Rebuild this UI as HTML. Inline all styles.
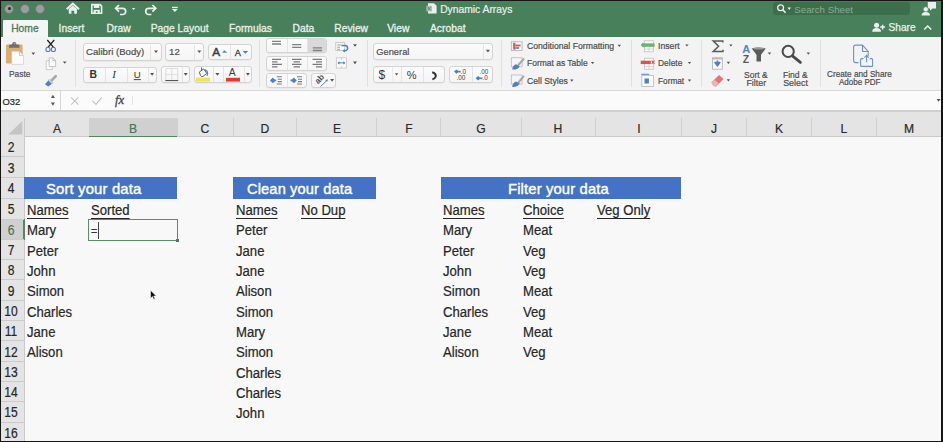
<!DOCTYPE html>
<html><head><meta charset="utf-8">
<style>
*{margin:0;padding:0;box-sizing:border-box}
html,body{width:943px;height:442px;overflow:hidden;background:#f8f8f8;font-family:"Liberation Sans",sans-serif;position:relative}
.a{position:absolute}
.t{position:absolute;white-space:nowrap;line-height:1}
</style></head><body>
<div class="a" style="left:0px;top:0px;width:943px;height:37px;background:#47805a"></div>
<div class="a" style="left:4.3px;top:3.8px;width:10px;height:10px;border-radius:50%;background:#9a9d9b;border:1px solid #6f7872"></div>
<div class="a" style="left:19.6px;top:3.8px;width:10px;height:10px;border-radius:50%;background:#9a9d9b;border:1px solid #6f7872"></div>
<div class="a" style="left:34.9px;top:3.8px;width:10px;height:10px;border-radius:50%;background:#9a9d9b;border:1px solid #6f7872"></div>
<div class="a" style="left:7.8px;top:7.3px;width:3px;height:3px;border-radius:50%;background:#2a2a2a"></div>
<svg class="a" style="left:60px;top:0px" width="400" height="20" viewBox="60 0 400 20">
 <path d="M66.7 9.2 L72.8 3.6 L79 9.2" fill="none" stroke="#eaf1ec" stroke-width="2" stroke-linejoin="miter"/>
 <path d="M68.8 9 L72.8 5.4 L76.9 9 V13.8 H74.2 V10.8 H71.4 V13.8 H68.8Z" fill="#eaf1ec"/>
 <path d="M91.8 4.6 H100 L101.6 6.2 V13.2 H91.8 Z" fill="none" stroke="#eaf1ec" stroke-width="1.6"/>
 <rect x="93.8" y="4.6" width="5.5" height="3.4" fill="#eaf1ec"/>
 <rect x="93.6" y="9.8" width="6.2" height="3.6" fill="#eaf1ec"/>
 <rect x="95.8" y="11.3" width="1.8" height="1.5" fill="#47805a"/>
 <path d="M116.2 8.3 H122.6 A3.1 3.1 0 0 1 122.6 14.5 H120" fill="none" stroke="#eaf1ec" stroke-width="1.7"/>
 <path d="M119 5 L115.6 8.3 L119 11.6" fill="none" stroke="#eaf1ec" stroke-width="1.7"/>
 <path d="M131.9 7.9 H135.29999999999998 L133.6 10.1Z" fill="#eaf1ec"/>
 <path d="M155.2 8.3 H148.8 A3.1 3.1 0 0 0 148.8 14.5 H151.4" fill="none" stroke="#eaf1ec" stroke-width="1.7"/>
 <path d="M152.4 5 L155.8 8.3 L152.4 11.6" fill="none" stroke="#eaf1ec" stroke-width="1.7"/>
 <rect x="172" y="6.8" width="5.8" height="1.3" fill="#eaf1ec"/>
 <path d="M171.9 9 H177.8 L174.85 12.1Z" fill="#eaf1ec"/>
 <path d="M428 3.2 H434 L436.6 5.8 V13.6 H428Z" fill="#eaf1ec"/>
 <rect x="426.3" y="5.8" width="5.6" height="5.6" fill="#a8c0ae"/>
 <path d="M427.6 7 L430.6 10.2 M430.6 7 L427.6 10.2" stroke="#47805a" stroke-width="0.8"/>
</svg>
<div class="t" style="left:440.20px;top:5.44px;font-size:10.3px;color:#eaf1ec;font-weight:normal;-webkit-text-stroke:0.2px #eaf1ec">Dynamic Arrays</div>
<div class="a" style="left:773px;top:2.3px;width:136.5px;height:13.2px;background:#3d6e4b;border-radius:3px"></div>
<svg class="a" style="left:770px;top:0px" width="30" height="18" viewBox="770 0 30 18">
 <circle cx="780.6" cy="7.7" r="2.9" fill="none" stroke="#eaf1ec" stroke-width="1.3"/>
 <path d="M782.8 9.9 L785.6 12.8" stroke="#eaf1ec" stroke-width="1.6"/>
 <path d="M787.4000000000001 7.6000000000000005 H791.0 L789.2 10.0Z" fill="#eaf1ec"/>
</svg>
<div class="t" style="left:794.30px;top:4.56px;font-size:9.7px;color:#89ab93;font-weight:normal;">Search Sheet</div>
<svg class="a" style="left:915px;top:0px" width="28" height="18" viewBox="915 0 28 18">
 <path d="M927.5 2 H936 V8.5 H932.5 L930 10.8 V8.5 H927.5Z" fill="#eaf1ec"/>
 <path d="M927.5 2 V8.5" stroke="#47805a" stroke-width="0.6"/>
 <circle cx="925.8" cy="9.3" r="2.6" fill="#eaf1ec" stroke="#47805a" stroke-width="0.7"/>
 <path d="M921.6 15.5 Q921.6 12 925.8 12 Q930 12 930 15.5Z" fill="#eaf1ec"/>
</svg>
<div class="a" style="left:3px;top:20.4px;width:45px;height:17px;background:#f5f5f5;border-radius:1px 1px 0 0"></div>
<div class="t" style="left:11.20px;top:23.74px;font-size:10.3px;color:#4a7a58;font-weight:normal;-webkit-text-stroke:0.3px #4a7a58">Home</div>
<div class="t" style="left:58.60px;top:23.74px;font-size:10.3px;color:#eaf1ec;font-weight:normal;-webkit-text-stroke:0.3px #eaf1ec">Insert</div>
<div class="t" style="left:106.60px;top:23.74px;font-size:10.3px;color:#eaf1ec;font-weight:normal;-webkit-text-stroke:0.3px #eaf1ec">Draw</div>
<div class="t" style="left:150.70px;top:23.74px;font-size:10.3px;color:#eaf1ec;font-weight:normal;-webkit-text-stroke:0.3px #eaf1ec">Page Layout</div>
<div class="t" style="left:228.90px;top:23.74px;font-size:10.3px;color:#eaf1ec;font-weight:normal;-webkit-text-stroke:0.3px #eaf1ec">Formulas</div>
<div class="t" style="left:292.50px;top:23.74px;font-size:10.3px;color:#eaf1ec;font-weight:normal;-webkit-text-stroke:0.3px #eaf1ec">Data</div>
<div class="t" style="left:334.30px;top:23.74px;font-size:10.3px;color:#eaf1ec;font-weight:normal;-webkit-text-stroke:0.3px #eaf1ec">Review</div>
<div class="t" style="left:387.20px;top:23.74px;font-size:10.3px;color:#eaf1ec;font-weight:normal;-webkit-text-stroke:0.3px #eaf1ec">View</div>
<div class="t" style="left:430.00px;top:23.74px;font-size:10.3px;color:#eaf1ec;font-weight:normal;-webkit-text-stroke:0.3px #eaf1ec">Acrobat</div>
<svg class="a" style="left:865px;top:18px" width="75" height="18" viewBox="865 18 75 18">
 <circle cx="876.6" cy="25.3" r="2.5" fill="#eaf1ec"/>
 <path d="M872.2 31.7 Q872.2 28 876.6 28 Q881 28 881 31.7Z" fill="#eaf1ec"/>
 <path d="M880.2 27.1 H885 M882.6 24.7 V29.5" stroke="#eaf1ec" stroke-width="1.5"/>
 <path d="M924.2 29.6 L927.7 26 L931.2 29.6" fill="none" stroke="#eaf1ec" stroke-width="1.5"/>
</svg>
<div class="t" style="left:888.60px;top:23.02px;font-size:10.1px;color:#eaf1ec;font-weight:normal;-webkit-text-stroke:0.25px #eaf1ec">Share</div>
<div class="a" style="left:0px;top:36.6px;width:943px;height:53.5px;background:#f3f3f3"></div>
<div class="a" style="left:0px;top:89.6px;width:943px;height:1px;background:#d9d9d9"></div>
<div class="a" style="left:75.4px;top:40px;width:1px;height:47px;background:#e0e0e0"></div>
<div class="a" style="left:259.3px;top:40px;width:1px;height:47px;background:#e0e0e0"></div>
<div class="a" style="left:366.5px;top:40px;width:1px;height:47px;background:#e0e0e0"></div>
<div class="a" style="left:500.5px;top:40px;width:1px;height:47px;background:#e0e0e0"></div>
<div class="a" style="left:631.2px;top:40px;width:1px;height:47px;background:#e0e0e0"></div>
<div class="a" style="left:700.5px;top:40px;width:1px;height:47px;background:#e0e0e0"></div>
<div class="a" style="left:819.7px;top:40px;width:1px;height:47px;background:#e0e0e0"></div>
<svg class="a" style="left:0px;top:36px" width="80" height="56" viewBox="0 36 80 56">
 <rect x="5.9" y="44.5" width="16.7" height="19" rx="1.2" fill="#d9ad72"/>
 <path d="M9 47.7 V46 Q9 44.6 10.6 44.6 H12 Q12.6 41.8 14.25 41.8 Q15.9 41.8 16.5 44.6 H17.9 Q19.5 44.6 19.5 46 V47.7Z" fill="#6e6e6e"/>
 <circle cx="14.6" cy="43.6" r="0.9" fill="#a0a0a0"/>
 <path d="M11.8 51.3 H19.4 L23.5 55.4 V64.4 H11.8Z" fill="#fbfbfb" stroke="#cfcfcf" stroke-width="0.7"/>
 <path d="M19.4 51.3 V55.4 H23.5" fill="none" stroke="#bdbdbd" stroke-width="0.8"/>
 <path d="M31.499999999999996 52.5 H35.099999999999994 L33.3 54.900000000000006Z" fill="#555"/>
 <path d="M47.3 40 L53.8 47.6 M54.2 40 L47.7 47.6" stroke="#1e1e1e" stroke-width="1.3"/>
 <circle cx="48" cy="49.4" r="2.1" fill="none" stroke="#4f7fc8" stroke-width="1.1"/>
 <circle cx="53.4" cy="49.4" r="2.1" fill="none" stroke="#4f7fc8" stroke-width="1.1"/>
 <path d="M46.2 60.8 H49.6 L52.2 63.4 V69.6 H46.2Z" fill="#fbfbfb" stroke="#c2c2c2" stroke-width="0.8"/>
 <path d="M49.2 57.8 H52.8 L55.6 60.6 V66.6 H49.2Z" fill="#fbfbfb" stroke="#b8b8b8" stroke-width="0.8"/>
 <path d="M52.8 57.8 V60.6 H55.6" fill="none" stroke="#b8b8b8" stroke-width="0.8"/>
 <path d="M62.900000000000006 61.4 H66.5 L64.7 63.800000000000004Z" fill="#555"/>
 <path d="M51.5 80.5 L55.8 76.2" stroke="#a7a7a7" stroke-width="2.6" stroke-linecap="round"/>
 <path d="M45 84.2 L49.3 79.2 L53.2 83.1 L48.2 86.6Z" fill="#4f7fc8"/>
 <path d="M49.3 79.2 L53.2 83.1 L52 84 L48.3 80.3Z" fill="#dcdcdc"/>
</svg>
<div class="t" style="left:8.90px;top:69.75px;font-size:9px;color:#4d4d4d;font-weight:normal;transform:scaleX(0.93);transform-origin:0 0;-webkit-text-stroke:0.2px #4d4d4d;">Paste</div>
<div class="a" style="left:82.5px;top:43.1px;width:79px;height:17.5px;background:linear-gradient(#fbfbfb,#f5f5f5);border:1px solid #d3d3d3;border-radius:3px;box-shadow:0 0.5px 0 #e2e2e2;"></div>
<div class="a" style="left:150.2px;top:44.5px;width:1px;height:15px;background:#e4e4e4"></div>
<div class="t" style="left:86.10px;top:47.24px;font-size:9.6px;color:#4d4d4d;font-weight:normal;-webkit-text-stroke:0.2px #4d4d4d;">Calibri (Body)</div>
<div class="a" style="left:165.4px;top:43.1px;width:39px;height:17.5px;background:linear-gradient(#fbfbfb,#f5f5f5);border:1px solid #d3d3d3;border-radius:3px;box-shadow:0 0.5px 0 #e2e2e2;"></div>
<div class="a" style="left:194.4px;top:44.5px;width:1px;height:15px;background:#e4e4e4"></div>
<div class="t" style="left:169.10px;top:47.24px;font-size:9.6px;color:#4d4d4d;font-weight:normal;-webkit-text-stroke:0.2px #4d4d4d;">12</div>
<div class="a" style="left:208.3px;top:43.5px;width:43.8px;height:16.7px;background:linear-gradient(#fbfbfb,#f5f5f5);border:1px solid #d3d3d3;border-radius:3px;box-shadow:0 0.5px 0 #e2e2e2;"></div>
<div class="a" style="left:230.4px;top:44.5px;width:1px;height:15px;background:#e4e4e4"></div>
<div class="a" style="left:82.5px;top:66.8px;width:74.1px;height:16.6px;background:linear-gradient(#fbfbfb,#f5f5f5);border:1px solid #d3d3d3;border-radius:3px;box-shadow:0 0.5px 0 #e2e2e2;"></div>
<div class="a" style="left:104.6px;top:67.8px;width:1px;height:14.6px;background:#e4e4e4"></div>
<div class="a" style="left:126.6px;top:67.8px;width:1px;height:14.6px;background:#e4e4e4"></div>
<div class="a" style="left:147.9px;top:67.8px;width:1px;height:14.6px;background:#e4e4e4"></div>
<div class="a" style="left:160.8px;top:66.3px;width:29.4px;height:16.9px;background:linear-gradient(#fbfbfb,#f5f5f5);border:1px solid #d3d3d3;border-radius:3px;box-shadow:0 0.5px 0 #e2e2e2;"></div>
<div class="a" style="left:181.8px;top:67.3px;width:1px;height:15px;background:#e4e4e4"></div>
<div class="a" style="left:194.2px;top:66.3px;width:57.9px;height:16.9px;background:linear-gradient(#fbfbfb,#f5f5f5);border:1px solid #d3d3d3;border-radius:3px;box-shadow:0 0.5px 0 #e2e2e2;"></div>
<div class="a" style="left:213.4px;top:67.3px;width:1px;height:15px;background:#e4e4e4"></div>
<div class="a" style="left:223px;top:67.3px;width:1px;height:15px;background:#e4e4e4"></div>
<div class="a" style="left:244px;top:67.3px;width:1px;height:15px;background:#e4e4e4"></div>
<svg class="a" style="left:75px;top:36px" width="190" height="56" viewBox="75 36 190 56">
 <path d="M154.0 50.5 H158.0 L156 53.099999999999994Z" fill="#555"/>
 <path d="M197.3 50.5 H201.3 L199.3 53.099999999999994Z" fill="#555"/>
 <text x="212.2" y="55.9" font-family="Liberation Sans" font-size="11.8" fill="#3c3c3c" stroke="#3c3c3c" stroke-width="0.45">A</text>
 <path d="M221.9 52.7 L224.55 50.2 L227.2 52.7Z" fill="#5283c9"/>
 <text x="234.8" y="55.5" font-family="Liberation Sans" font-size="9.2" fill="#3c3c3c" stroke="#3c3c3c" stroke-width="0.3">A</text>
 <path d="M242.6 51 H248.3 L245.45 53.8Z" fill="#5283c9"/>
 <text x="89.6" y="78.2" font-family="Liberation Sans" font-size="10.4" font-weight="bold" fill="#333">B</text>
 <text x="112.2" y="78.2" font-family="Liberation Serif" font-style="italic" font-size="11" fill="#333">I</text>
 <text x="133.7" y="77.6" font-family="Liberation Sans" font-size="9.6" fill="#333">U</text>
 <rect x="133.8" y="79.2" width="7" height="0.9" fill="#333"/>
 <path d="M150.1 73.10000000000001 H154.1 L152.1 75.7Z" fill="#555"/>
 <rect x="165.8" y="68.6" width="12" height="12" fill="none" stroke="#d6d6d6" stroke-width="0.8"/>
 <path d="M171.8 68.6 V80.6 M165.8 74.6 H177.8" stroke="#d6d6d6" stroke-width="0.8"/>
 <rect x="165.4" y="80" width="12.8" height="1.1" fill="#555"/>
 <path d="M183.7 73.10000000000001 H187.7 L185.7 75.7Z" fill="#555"/>
 <path d="M199.2 72.2 L203.6 69 L206.8 73.4 L203 76.4 Q201.6 77 200.6 75.6Z" fill="#fbfbfb" stroke="#505050" stroke-width="0.9" stroke-linejoin="round"/>
 <path d="M201.6 67.4 V71" stroke="#505050" stroke-width="0.9"/>
 <path d="M204.6 69.6 Q207.6 70.4 207.6 73.6 Q207.6 75.2 206.8 75.8" fill="none" stroke="#5283c9" stroke-width="1.2"/>
 <rect x="195.9" y="77.6" width="14.1" height="4" fill="#f0e35a"/>
 <path d="M215.4 73.10000000000001 H219.4 L217.4 75.7Z" fill="#555"/>
 <text x="228.7" y="76.2" font-family="Liberation Sans" font-size="10.4" fill="#3c3c3c">A</text>
 <rect x="226.1" y="77.8" width="13.9" height="3.8" fill="#e03a33"/>
 <path d="M245.9 73.10000000000001 H249.9 L247.9 75.7Z" fill="#555"/>
</svg>
<div class="a" style="left:266.2px;top:37.9px;width:61.3px;height:15.6px;background:linear-gradient(#fbfbfb,#f5f5f5);border:1px solid #d3d3d3;border-radius:3px;box-shadow:0 0.5px 0 #e2e2e2;"></div>
<div class="a" style="left:307.4px;top:38.9px;width:19.1px;height:13.6px;background:#d9d9d9;border-radius:0 2px 2px 0"></div>
<div class="a" style="left:286.5px;top:38.9px;width:1px;height:13.6px;background:#e4e4e4"></div>
<div class="a" style="left:307.4px;top:38.9px;width:1px;height:13.6px;background:#e4e4e4"></div>
<div class="a" style="left:266.2px;top:55.6px;width:61.3px;height:15.3px;background:linear-gradient(#fbfbfb,#f5f5f5);border:1px solid #d3d3d3;border-radius:3px;box-shadow:0 0.5px 0 #e2e2e2;"></div>
<div class="a" style="left:286.5px;top:56.6px;width:1px;height:13.3px;background:#e4e4e4"></div>
<div class="a" style="left:307.4px;top:56.6px;width:1px;height:13.3px;background:#e4e4e4"></div>
<div class="a" style="left:266.2px;top:73.4px;width:40.6px;height:14.8px;background:linear-gradient(#fbfbfb,#f5f5f5);border:1px solid #d3d3d3;border-radius:3px;box-shadow:0 0.5px 0 #e2e2e2;"></div>
<div class="a" style="left:286.5px;top:74.4px;width:1px;height:12.8px;background:#e4e4e4"></div>
<div class="a" style="left:311px;top:73.4px;width:25.3px;height:14.8px;background:linear-gradient(#fbfbfb,#f5f5f5);border:1px solid #d3d3d3;border-radius:3px;box-shadow:0 0.5px 0 #e2e2e2;"></div>
<svg class="a" style="left:262px;top:36px" width="110" height="56" viewBox="262 36 110 56">
 <g stroke="#808080" stroke-width="1.3">
 <path d="M272 41.3 H281 M272 44 H281"/>
 <path d="M292.2 44.6 H301.3 M292.2 47.4 H301.3"/>
 <path d="M312.8 47.8 H322 M312.8 50.5 H322"/>
 </g>
 <g stroke="#7a7a7a" stroke-width="1.1">
 <path d="M272 59.4 H281 M272 61.9 H277.5 M272 64.4 H282 M272 66.9 H277.5"/>
 <path d="M292 59.4 H301.5 M293.6 61.9 H300 M292 64.4 H301.5 M293.6 66.9 H300"/>
 <path d="M312.5 59.4 H322 M316 61.9 H322 M312.5 64.4 H322 M316 66.9 H322"/>
 <path d="M276.8 76.8 H281.8 M277.8 79.2 H281.8 M277.8 81.6 H281.8 M276.8 84 H281.8"/>
 <path d="M297 76.8 H302 M298 79.2 H302 M298 81.6 H302 M297 84 H302"/>
 </g>
 <path d="M270 80.4 L272.8 77.6 L275.7 80.4 L272.8 83.2Z" fill="#4f7fc8"/><rect x="273" y="79.6" width="3.2" height="1.6" fill="#4f7fc8"/>
 <path d="M296.7 80.4 L293.9 77.6 L291 80.4 L293.9 83.2Z" fill="#4f7fc8"/><rect x="290.5" y="79.6" width="3.2" height="1.6" fill="#4f7fc8"/>
 <text x="0" y="0" font-family="Liberation Sans" font-size="8.4" font-weight="bold" fill="#505050" transform="translate(318.2 84.4) rotate(-48)">ab</text>
 <path d="M320.6 86.4 L327.5 80" stroke="#5283c9" stroke-width="1"/>
 <path d="M327.8 79.4 L325.2 80 L327.2 82Z" fill="#5283c9"/>
 <path d="M330.1 79.10000000000001 H334.1 L332.1 81.7Z" fill="#555"/>
 <rect x="335.8" y="42.6" width="9" height="7.8" fill="#fafafa" stroke="#bcbcbc" stroke-width="0.8"/>
 <path d="M337.2 45 H341.5 M337.2 47.3 H340 M337.2 49.3 H340" stroke="#8a8a8a" stroke-width="0.8"/>
 <path d="M341.5 45.6 H345 A2.6 2.6 0 0 1 345 50.8 H343.5" fill="none" stroke="#4f7fc8" stroke-width="1.5"/>
 <path d="M344.8 49 L342.5 50.8 L344.8 52.6Z" fill="#4f7fc8"/>
 <path d="M353.0 44.2 H357.0 L355 46.8Z" fill="#555"/>
 <rect x="336.3" y="57.8" width="10.2" height="10.3" fill="#fafafa" stroke="#c4c4c4" stroke-width="0.8"/>
 <path d="M341.4 57.8 V60 M341.4 66 V68" stroke="#c4c4c4" stroke-width="0.8"/>
 <path d="M338 62.9 H344.8" stroke="#4f7fc8" stroke-width="1"/>
 <path d="M337.5 62.9 L339.5 61.2 V64.6Z M345.3 62.9 L343.3 61.2 V64.6Z" fill="#4f7fc8"/>
 <path d="M353.0 61.6 H357.0 L355 64.2Z" fill="#555"/>
</svg>
<div class="a" style="left:372.7px;top:43.1px;width:120.2px;height:17.4px;background:linear-gradient(#fbfbfb,#f5f5f5);border:1px solid #d3d3d3;border-radius:3px;box-shadow:0 0.5px 0 #e2e2e2;"></div>
<div class="a" style="left:482.5px;top:44.5px;width:1px;height:14.6px;background:#e4e4e4"></div>
<div class="t" style="left:376.30px;top:47.89px;font-size:9.3px;color:#4d4d4d;font-weight:normal;-webkit-text-stroke:0.2px #4d4d4d;">General</div>
<div class="a" style="left:373.1px;top:66.4px;width:72px;height:17.1px;background:linear-gradient(#fbfbfb,#f5f5f5);border:1px solid #d3d3d3;border-radius:3px;box-shadow:0 0.5px 0 #e2e2e2;"></div>
<div class="a" style="left:392.4px;top:67.4px;width:1px;height:15.1px;background:#ececec"></div>
<div class="a" style="left:401.3px;top:67.4px;width:1px;height:15.1px;background:#e4e4e4"></div>
<div class="a" style="left:423.2px;top:67.4px;width:1px;height:15.1px;background:#e4e4e4"></div>
<div class="a" style="left:449.3px;top:66.4px;width:43.6px;height:17.1px;background:linear-gradient(#fbfbfb,#f5f5f5);border:1px solid #d3d3d3;border-radius:3px;box-shadow:0 0.5px 0 #e2e2e2;"></div>
<div class="a" style="left:471.6px;top:67.4px;width:1px;height:15.1px;background:#e4e4e4"></div>
<svg class="a" style="left:365px;top:36px" width="135" height="56" viewBox="365 36 135 56">
 <path d="M485.9 49.800000000000004 H489.9 L487.9 52.4Z" fill="#555"/>
 <text x="378.4" y="79.4" font-family="Liberation Sans" font-size="12" fill="#333">$</text>
 <path d="M394.90000000000003 73.2 H398.3 L396.6 75.39999999999999Z" fill="#555"/>
 <text x="406.8" y="79.3" font-family="Liberation Sans" font-size="11" fill="#3a3a3a">%</text>
 <path d="M432.2 72.2 Q436.6 73.6 435.6 76.8 Q435 78.6 432.3 79.4" fill="none" stroke="#333" stroke-width="2"/>
 <path d="M454 71.6 L456.5 69.4 L459 71.6 L456.5 73.8Z" fill="#4f7fc8"/><rect x="457.5" y="70.8" width="3.2" height="1.6" fill="#4f7fc8"/>
 <text x="460.8" y="74" font-family="Liberation Sans" font-size="6.3" fill="#444">.0</text>
 <text x="456.6" y="80.2" font-family="Liberation Sans" font-size="6.3" fill="#444">.00</text>
 <text x="479.6" y="74" font-family="Liberation Sans" font-size="6.3" fill="#444">.00</text>
 <path d="M475.6 78.3 L478.1 76.1 L480.6 78.3 L478.1 80.5Z" fill="#4f7fc8"/><rect x="479.2" y="77.5" width="3.2" height="1.6" fill="#4f7fc8"/>
 <text x="482.6" y="80.2" font-family="Liberation Sans" font-size="6.3" fill="#444">.0</text>
</svg>
<svg class="a" style="left:505px;top:36px" width="125" height="56" viewBox="505 36 125 56">
 <rect x="511.3" y="41.8" width="10.8" height="8.8" fill="#f8f8f8" stroke="#b0b0b0" stroke-width="0.8"/>
 <rect x="513.2" y="42.8" width="2.2" height="6.8" fill="#d9534f"/>
 <rect x="515.4" y="44.6" width="5.2" height="1.8" fill="#d9534f"/>
 <rect x="515.4" y="47.2" width="3.8" height="1.6" fill="#5283c9"/>
 <rect x="511.3" y="57.8" width="10.8" height="9" fill="#f3f5f8" stroke="#b8b8b8" stroke-width="0.8"/>
 <path d="M518.6 64.8 L523.4 59.2" stroke="#a9a9a9" stroke-width="2.2" stroke-linecap="round"/><path d="M512.2 69.6 Q512.6 65.4 516 64.2 L519.6 66.2 Q518.4 69.8 512.2 69.6Z" fill="#4f7fc8"/>
 <rect x="511.3" y="75" width="10.8" height="9" fill="#f3f5f8" stroke="#b8b8b8" stroke-width="0.8"/>
 <path d="M518.6 82.2 L523.4 76.6" stroke="#a9a9a9" stroke-width="2.2" stroke-linecap="round"/><path d="M512.2 87 Q512.6 82.8 516 81.6 L519.6 83.6 Q518.4 87.2 512.2 87Z" fill="#4f7fc8"/>
 <path d="M617.5999999999999 44.8 H621.0 L619.3 47.0Z" fill="#555"/>
 <path d="M590.9 61.9 H594.3000000000001 L592.6 64.1Z" fill="#555"/>
 <path d="M570.0999999999999 79.5 H573.5 L571.8 81.69999999999999Z" fill="#555"/>
</svg>
<div class="t" style="left:526.90px;top:41.94px;font-size:8.9px;color:#4d4d4d;font-weight:normal;transform:scaleX(0.975);transform-origin:0 0;-webkit-text-stroke:0.2px #4d4d4d;">Conditional Formatting</div>
<div class="t" style="left:526.90px;top:59.44px;font-size:8.9px;color:#4d4d4d;font-weight:normal;transform:scaleX(0.955);transform-origin:0 0;-webkit-text-stroke:0.2px #4d4d4d;">Format as Table</div>
<div class="t" style="left:526.90px;top:77.44px;font-size:8.9px;color:#4d4d4d;font-weight:normal;transform:scaleX(0.975);transform-origin:0 0;-webkit-text-stroke:0.2px #4d4d4d;">Cell Styles</div>
<svg class="a" style="left:635px;top:36px" width="65" height="56" viewBox="635 36 65 56">
 <rect x="644.5" y="40.8" width="8.8" height="11" fill="#fafafa" stroke="#c0c0c0" stroke-width="0.8"/>
 <path d="M644.5 49 H653.3 M649 46.8 V51.8" stroke="#c8c8c8" stroke-width="0.7"/>
 <rect x="642.5" y="43.4" width="12.1" height="3.4" fill="#6bb26b"/>
 <path d="M640.7 45.1 L643.3 42.4 V47.8Z" fill="#6bb26b"/>
 <rect x="644.5" y="58.2" width="8.8" height="11" fill="#fafafa" stroke="#c0c0c0" stroke-width="0.8"/>
 <path d="M644.5 66.5 H653.3 M649 64.1 V69.2" stroke="#c8c8c8" stroke-width="0.7"/>
 <rect x="640.7" y="60.7" width="10.1" height="3.4" fill="#d9534f"/>
 <path d="M651.6 60.6 L654.6 63.8 M654.6 60.6 L651.6 63.8" stroke="#d9534f" stroke-width="1.1"/>
 <rect x="641.8" y="75.4" width="11.8" height="11" fill="#fafafa" stroke="#b8b8b8" stroke-width="0.8"/>
 <rect x="641.3" y="73.8" width="8" height="1" fill="#5283c9"/>
 <rect x="644.5" y="78.5" width="4.4" height="5" fill="#4f7fc8"/>
 <path d="M685.1999999999999 44.4 H688.6 L686.9 46.6Z" fill="#555"/>
 <path d="M687.8 61.9 H691.2 L689.5 64.1Z" fill="#555"/>
 <path d="M687.8 79.5 H691.2 L689.5 81.69999999999999Z" fill="#555"/>
</svg>
<div class="t" style="left:657.80px;top:42.14px;font-size:8.9px;color:#4d4d4d;font-weight:normal;transform:scaleX(0.98);transform-origin:0 0;-webkit-text-stroke:0.2px #4d4d4d;">Insert</div>
<div class="t" style="left:657.80px;top:59.44px;font-size:8.9px;color:#4d4d4d;font-weight:normal;transform:scaleX(0.95);transform-origin:0 0;-webkit-text-stroke:0.2px #4d4d4d;">Delete</div>
<div class="t" style="left:657.80px;top:76.84px;font-size:8.9px;color:#4d4d4d;font-weight:normal;transform:scaleX(0.93);transform-origin:0 0;-webkit-text-stroke:0.2px #4d4d4d;">Format</div>
<svg class="a" style="left:705px;top:36px" width="115" height="56" viewBox="705 36 115 56">
 <path d="M722.8 42.6 V40.9 H713.2 L718.6 46.2 L713.2 51.5 H723 V49.8" fill="none" stroke="#5a5a5a" stroke-width="1.5" stroke-linejoin="miter"/>
 <path d="M729.1999999999999 44.4 H732.6 L730.9 46.6Z" fill="#555"/>
 <rect x="712.5" y="57.8" width="9.8" height="11.4" fill="#f8f8f8" stroke="#b0b0b0" stroke-width="0.8"/>
 <rect x="712.5" y="57.8" width="9.8" height="1.6" fill="#b9b9b9"/>
 <path d="M717.4 60.6 V64 M715 62.6 L717.4 65.8 L719.8 62.6Z" stroke="#4f7fc8" stroke-width="1.6" fill="#4f7fc8" stroke-linejoin="round"/>
 <path d="M726.6999999999999 61.8 H730.1 L728.4 64.0Z" fill="#555"/>
 <path d="M711.4 82.4 L719 75 L723.6 79 L716 86.4 Q713.8 86.8 711.4 82.4Z" fill="#e07577"/>
 <path d="M711.4 82.4 L714.4 79.6 L718.8 83.6 L716 86.4 Q713.8 86.8 711.4 82.4Z" fill="#f0b0b0"/>
 <path d="M726.6999999999999 79.30000000000001 H730.1 L728.4 81.5Z" fill="#555"/>
 <text x="742.2" y="53.1" font-family="Liberation Sans" font-size="11" font-weight="bold" fill="#5283c9">A</text>
 <text x="742.8" y="63.3" font-family="Liberation Sans" font-size="10.4" font-weight="bold" fill="#5a5a5a">Z</text>
 <path d="M751.7 48.4 Q758.7 46.6 765.7 48.4 L761 54.8 V61.4 H756.5 V54.8Z" fill="#5b5b5b"/>
 <ellipse cx="758.7" cy="48.6" rx="5.6" ry="1" fill="#9a9a9a"/>
 <path d="M767.8 52.6 H771.2 L769.5 54.800000000000004Z" fill="#555"/>
 <circle cx="788.2" cy="51.4" r="5.6" fill="none" stroke="#4a4a4a" stroke-width="2"/>
 <path d="M792.4 55.8 L800.4 62.4" stroke="#4a4a4a" stroke-width="2.8" stroke-linecap="round"/>
 <path d="M806.5999999999999 52.6 H810.0 L808.3 54.800000000000004Z" fill="#555"/>
</svg>
<div class="t" style="left:744.10px;top:70.73px;font-size:8.9px;color:#4d4d4d;font-weight:normal;transform:scaleX(0.96);transform-origin:0 0;-webkit-text-stroke:0.2px #4d4d4d;">Sort &amp;</div>
<div class="t" style="left:746.40px;top:78.73px;font-size:8.9px;color:#4d4d4d;font-weight:normal;-webkit-text-stroke:0.2px #4d4d4d;">Filter</div>
<div class="t" style="left:782.90px;top:70.73px;font-size:8.9px;color:#4d4d4d;font-weight:normal;transform:scaleX(0.96);transform-origin:0 0;-webkit-text-stroke:0.2px #4d4d4d;">Find &amp;</div>
<div class="t" style="left:783.20px;top:78.73px;font-size:8.9px;color:#4d4d4d;font-weight:normal;-webkit-text-stroke:0.2px #4d4d4d;">Select</div>
<svg class="a" style="left:840px;top:36px" width="40" height="35" viewBox="840 36 40 35">
 <path d="M858.5 62.6 H855.6 Q853.6 62.6 853.6 60.6 V47.1 Q853.6 45.1 855.6 45.1 H862.5 L868.2 51.5 V56" fill="none" stroke="#6b92d0" stroke-width="1.1"/>
 <path d="M862.5 45.1 V51.5 H868.2" fill="none" stroke="#6b92d0" stroke-width="1.1"/>
 <path d="M863.5 58.6 H861.6 Q860.6 58.6 860.6 59.6 V65.4 Q860.6 66.4 861.6 66.4 H871.6 Q872.6 66.4 872.6 65.4 V59.6 Q872.6 58.6 871.6 58.6 H869.8" fill="none" stroke="#6b92d0" stroke-width="1.1"/>
 <path d="M866.6 62.2 V55.5 M864.4 57.6 L866.6 55.2 L868.8 57.6" fill="none" stroke="#6b92d0" stroke-width="1.1"/>
</svg>
<div class="t" style="left:827.40px;top:70.34px;font-size:8.9px;color:#4d4d4d;font-weight:normal;transform:scaleX(0.925);transform-origin:0 0;-webkit-text-stroke:0.2px #4d4d4d;">Create and Share</div>
<div class="t" style="left:839.00px;top:78.44px;font-size:8.9px;color:#4d4d4d;font-weight:normal;transform:scaleX(0.905);transform-origin:0 0;-webkit-text-stroke:0.2px #4d4d4d;">Adobe PDF</div>
<div class="a" style="left:0px;top:90.5px;width:943px;height:19.8px;background:#fbfbfb"></div>
<div class="a" style="left:0px;top:110.2px;width:943px;height:1.6px;background:#cfcfcf"></div>
<div class="t" style="left:2.40px;top:97.21px;font-size:9.4px;color:#262626;font-weight:normal;-webkit-text-stroke:0.2px #262626">O32</div>
<svg class="a" style="left:45px;top:90px" width="60" height="20" viewBox="45 90 60 20">
 <path d="M50.9 97.9 L52.9 94.7 L54.9 97.9Z" fill="#5a5a5a"/>
 <path d="M50.9 102.6 L52.9 105.8 L54.9 102.6Z" fill="#5a5a5a"/>
 <path d="M71.2 97.4 L78.4 104.6 M78.4 97.4 L71.2 104.6" stroke="#c2c2c2" stroke-width="1.1"/>
 <path d="M92.5 100.8 L96 104.4 L101.8 97.4" fill="none" stroke="#c2c2c2" stroke-width="1.1"/>
</svg>
<div class="a" style="left:59.6px;top:90.5px;width:1px;height:19.8px;background:#d6d6d6"></div>
<div class="a" style="left:131.7px;top:96px;width:1px;height:9px;background:#e2e2e2"></div>
<div class="t" style="left:115px;top:94.3px;font-size:12.6px;color:#4a4a4a;font-family:'Liberation Serif',serif;font-style:italic;-webkit-text-stroke:0.35px #4a4a4a">fx</div>
<svg class="a" style="left:930px;top:90px" width="13" height="20" viewBox="930 90 13 20"><path d="M936.6 99.10000000000001 H940.6 L938.6 101.7Z" fill="#555"/></svg>
<div class="a" style="left:0px;top:111.8px;width:943px;height:25.2px;background:#e4e4e4"></div>
<div class="a" style="left:24px;top:136.3px;width:919px;height:0.9px;background:#c9c9c9"></div>
<div class="a" style="left:89px;top:118.3px;width:88px;height:18px;background:#d0d0d0"></div>
<div class="a" style="left:89px;top:135.6px;width:88px;height:1.6px;background:#4e8a5e"></div>
<div class="a" style="left:88.5px;top:118px;width:1px;height:18.3px;background:#d0d0d0"></div>
<div class="t" style="left:36.60px;width:40px;text-align:center;top:121.58px;font-size:13.2px;color:#2a2a2a;font-weight:normal;transform:scaleX(0.92);-webkit-text-stroke:0.2px #2a2a2a">A</div>
<div class="a" style="left:176.5px;top:118px;width:1px;height:18.3px;background:#d0d0d0"></div>
<div class="t" style="left:113.00px;width:40px;text-align:center;top:121.58px;font-size:13.2px;color:#4a7458;font-weight:normal;transform:scaleX(0.92);-webkit-text-stroke:0.2px #4a7458">B</div>
<div class="a" style="left:232.5px;top:118px;width:1px;height:18.3px;background:#d0d0d0"></div>
<div class="t" style="left:185.00px;width:40px;text-align:center;top:121.58px;font-size:13.2px;color:#2a2a2a;font-weight:normal;transform:scaleX(0.92);-webkit-text-stroke:0.2px #2a2a2a">C</div>
<div class="a" style="left:296.2px;top:118px;width:1px;height:18.3px;background:#d0d0d0"></div>
<div class="t" style="left:244.85px;width:40px;text-align:center;top:121.58px;font-size:13.2px;color:#2a2a2a;font-weight:normal;transform:scaleX(0.92);-webkit-text-stroke:0.2px #2a2a2a">D</div>
<div class="a" style="left:376.1px;top:118px;width:1px;height:18.3px;background:#d0d0d0"></div>
<div class="t" style="left:316.65px;width:40px;text-align:center;top:121.58px;font-size:13.2px;color:#2a2a2a;font-weight:normal;transform:scaleX(0.92);-webkit-text-stroke:0.2px #2a2a2a">E</div>
<div class="a" style="left:440.3px;top:118px;width:1px;height:18.3px;background:#d0d0d0"></div>
<div class="t" style="left:388.70px;width:40px;text-align:center;top:121.58px;font-size:13.2px;color:#2a2a2a;font-weight:normal;transform:scaleX(0.92);-webkit-text-stroke:0.2px #2a2a2a">F</div>
<div class="a" style="left:520.5px;top:118px;width:1px;height:18.3px;background:#d0d0d0"></div>
<div class="t" style="left:460.90px;width:40px;text-align:center;top:121.58px;font-size:13.2px;color:#2a2a2a;font-weight:normal;transform:scaleX(0.92);-webkit-text-stroke:0.2px #2a2a2a">G</div>
<div class="a" style="left:595.3px;top:118px;width:1px;height:18.3px;background:#d0d0d0"></div>
<div class="t" style="left:538.40px;width:40px;text-align:center;top:121.58px;font-size:13.2px;color:#2a2a2a;font-weight:normal;transform:scaleX(0.92);-webkit-text-stroke:0.2px #2a2a2a">H</div>
<div class="a" style="left:680.8px;top:118px;width:1px;height:18.3px;background:#d0d0d0"></div>
<div class="t" style="left:618.55px;width:40px;text-align:center;top:121.58px;font-size:13.2px;color:#2a2a2a;font-weight:normal;transform:scaleX(0.92);-webkit-text-stroke:0.2px #2a2a2a">I</div>
<div class="a" style="left:745.6px;top:118px;width:1px;height:18.3px;background:#d0d0d0"></div>
<div class="t" style="left:693.70px;width:40px;text-align:center;top:121.58px;font-size:13.2px;color:#2a2a2a;font-weight:normal;transform:scaleX(0.92);-webkit-text-stroke:0.2px #2a2a2a">J</div>
<div class="a" style="left:810.5px;top:118px;width:1px;height:18.3px;background:#d0d0d0"></div>
<div class="t" style="left:758.55px;width:40px;text-align:center;top:121.58px;font-size:13.2px;color:#2a2a2a;font-weight:normal;transform:scaleX(0.92);-webkit-text-stroke:0.2px #2a2a2a">K</div>
<div class="a" style="left:875.5px;top:118px;width:1px;height:18.3px;background:#d0d0d0"></div>
<div class="t" style="left:823.50px;width:40px;text-align:center;top:121.58px;font-size:13.2px;color:#2a2a2a;font-weight:normal;transform:scaleX(0.92);-webkit-text-stroke:0.2px #2a2a2a">L</div>
<div class="t" style="left:888.50px;width:40px;text-align:center;top:121.58px;font-size:13.2px;color:#2a2a2a;font-weight:normal;transform:scaleX(0.92);-webkit-text-stroke:0.2px #2a2a2a">M</div>
<svg class="a" style="left:0px;top:112px" width="26" height="26" viewBox="0 112 26 26"><path d="M8.3 134.4 L22.3 134.4 L22.3 121Z" fill="#c4c4c4"/></svg>
<div class="a" style="left:24px;top:118px;width:1px;height:19px;background:#c9c9c9"></div>
<div class="a" style="left:0px;top:137px;width:24.2px;height:305px;background:#e4e4e4"></div>
<div class="a" style="left:24.2px;top:137px;width:0.9px;height:305px;background:#c9c9c9"></div>
<div class="a" style="left:0px;top:219.3px;width:24.2px;height:20.3px;background:#d0d0d0"></div>
<div class="a" style="left:23.2px;top:219.3px;width:1.8px;height:20.3px;background:#4e8a5e"></div>
<div class="a" style="left:0px;top:156.45px;width:24.2px;height:0.9px;background:#cbcbcb"></div>
<div class="t" style="left:-3.70px;width:30px;text-align:center;top:140.46px;font-size:14.4px;color:#262626;font-weight:normal;transform:scaleX(0.84);-webkit-text-stroke:0.2px #262626">2</div>
<div class="a" style="left:0px;top:176.7px;width:24.2px;height:0.9px;background:#cbcbcb"></div>
<div class="t" style="left:-3.70px;width:30px;text-align:center;top:160.71px;font-size:14.4px;color:#262626;font-weight:normal;transform:scaleX(0.84);-webkit-text-stroke:0.2px #262626">3</div>
<div class="a" style="left:0px;top:198.2px;width:24.2px;height:0.9px;background:#cbcbcb"></div>
<div class="t" style="left:-3.70px;width:30px;text-align:center;top:180.96px;font-size:14.4px;color:#262626;font-weight:normal;transform:scaleX(0.84);-webkit-text-stroke:0.2px #262626">4</div>
<div class="a" style="left:0px;top:218.5px;width:24.2px;height:0.9px;background:#cbcbcb"></div>
<div class="t" style="left:-3.70px;width:30px;text-align:center;top:202.46px;font-size:14.4px;color:#262626;font-weight:normal;transform:scaleX(0.84);-webkit-text-stroke:0.2px #262626">5</div>
<div class="a" style="left:0px;top:238.79999999999998px;width:24.2px;height:0.9px;background:#cbcbcb"></div>
<div class="t" style="left:-3.70px;width:30px;text-align:center;top:222.76px;font-size:14.4px;color:#48705a;font-weight:normal;transform:scaleX(0.84);-webkit-text-stroke:0.2px #48705a">6</div>
<div class="a" style="left:0px;top:259.09999999999997px;width:24.2px;height:0.9px;background:#cbcbcb"></div>
<div class="t" style="left:-3.70px;width:30px;text-align:center;top:243.06px;font-size:14.4px;color:#262626;font-weight:normal;transform:scaleX(0.84);-webkit-text-stroke:0.2px #262626">7</div>
<div class="a" style="left:0px;top:279.4px;width:24.2px;height:0.9px;background:#cbcbcb"></div>
<div class="t" style="left:-3.70px;width:30px;text-align:center;top:263.36px;font-size:14.4px;color:#262626;font-weight:normal;transform:scaleX(0.84);-webkit-text-stroke:0.2px #262626">8</div>
<div class="a" style="left:0px;top:299.7px;width:24.2px;height:0.9px;background:#cbcbcb"></div>
<div class="t" style="left:-3.70px;width:30px;text-align:center;top:283.66px;font-size:14.4px;color:#262626;font-weight:normal;transform:scaleX(0.84);-webkit-text-stroke:0.2px #262626">9</div>
<div class="a" style="left:0px;top:320.0px;width:24.2px;height:0.9px;background:#cbcbcb"></div>
<div class="t" style="left:-3.70px;width:30px;text-align:center;top:303.96px;font-size:14.4px;color:#262626;font-weight:normal;transform:scaleX(0.84);-webkit-text-stroke:0.2px #262626">10</div>
<div class="a" style="left:0px;top:340.3px;width:24.2px;height:0.9px;background:#cbcbcb"></div>
<div class="t" style="left:-3.70px;width:30px;text-align:center;top:324.26px;font-size:14.4px;color:#262626;font-weight:normal;transform:scaleX(0.84);-webkit-text-stroke:0.2px #262626">11</div>
<div class="a" style="left:0px;top:360.59999999999997px;width:24.2px;height:0.9px;background:#cbcbcb"></div>
<div class="t" style="left:-3.70px;width:30px;text-align:center;top:344.56px;font-size:14.4px;color:#262626;font-weight:normal;transform:scaleX(0.84);-webkit-text-stroke:0.2px #262626">12</div>
<div class="a" style="left:0px;top:380.90000000000003px;width:24.2px;height:0.9px;background:#cbcbcb"></div>
<div class="t" style="left:-3.70px;width:30px;text-align:center;top:364.86px;font-size:14.4px;color:#262626;font-weight:normal;transform:scaleX(0.84);-webkit-text-stroke:0.2px #262626">13</div>
<div class="a" style="left:0px;top:401.2px;width:24.2px;height:0.9px;background:#cbcbcb"></div>
<div class="t" style="left:-3.70px;width:30px;text-align:center;top:385.16px;font-size:14.4px;color:#262626;font-weight:normal;transform:scaleX(0.84);-webkit-text-stroke:0.2px #262626">14</div>
<div class="a" style="left:0px;top:421.5px;width:24.2px;height:0.9px;background:#cbcbcb"></div>
<div class="t" style="left:-3.70px;width:30px;text-align:center;top:405.46px;font-size:14.4px;color:#262626;font-weight:normal;transform:scaleX(0.84);-webkit-text-stroke:0.2px #262626">15</div>
<div class="a" style="left:0px;top:441.8px;width:24.2px;height:0.9px;background:#cbcbcb"></div>
<div class="t" style="left:-3.70px;width:30px;text-align:center;top:425.76px;font-size:14.4px;color:#262626;font-weight:normal;transform:scaleX(0.84);-webkit-text-stroke:0.2px #262626">16</div>
<div class="a" style="left:24.2px;top:177.3px;width:152.8px;height:21.9px;background:#4472c4"></div>
<div class="t" style="left:46.30px;top:182.28px;font-size:14.5px;color:#ffffff;font-weight:normal;transform:scaleX(1.02396);transform-origin:0 0;-webkit-text-stroke:0.4px #fff;letter-spacing:0.15px;">Sort your data</div>
<div class="a" style="left:232.6px;top:177.3px;width:143.4px;height:21.9px;background:#4472c4"></div>
<div class="t" style="left:246.90px;top:182.28px;font-size:14.5px;color:#ffffff;font-weight:normal;transform:scaleX(1.007);transform-origin:0 0;-webkit-text-stroke:0.4px #fff;letter-spacing:0.15px;">Clean your data</div>
<div class="a" style="left:440.5px;top:177.3px;width:240.39999999999998px;height:21.9px;background:#4472c4"></div>
<div class="t" style="left:507.50px;top:182.28px;font-size:14.5px;color:#ffffff;font-weight:normal;transform:scaleX(1.0176);transform-origin:0 0;-webkit-text-stroke:0.4px #fff;letter-spacing:0.15px;">Filter your data</div>
<div class="t" style="left:27.00px;top:204.17px;font-size:13.8px;color:#262626;font-weight:normal;transform:scaleX(0.95);transform-origin:0 0;text-decoration:underline;text-decoration-thickness:1px;text-underline-offset:2.8px;-webkit-text-stroke:0.2px #262626;">Names</div>
<div class="t" style="left:91.00px;top:204.17px;font-size:13.8px;color:#262626;font-weight:normal;transform:scaleX(0.95);transform-origin:0 0;text-decoration:underline;text-decoration-thickness:1px;text-underline-offset:2.8px;-webkit-text-stroke:0.2px #262626;">Sorted</div>
<div class="t" style="left:27.00px;top:224.47px;font-size:13.8px;color:#262626;font-weight:normal;transform:scaleX(0.95);transform-origin:0 0;-webkit-text-stroke:0.2px #262626;">Mary</div>
<div class="t" style="left:27.00px;top:244.77px;font-size:13.8px;color:#262626;font-weight:normal;transform:scaleX(0.95);transform-origin:0 0;-webkit-text-stroke:0.2px #262626;">Peter</div>
<div class="t" style="left:27.00px;top:265.07px;font-size:13.8px;color:#262626;font-weight:normal;transform:scaleX(0.95);transform-origin:0 0;-webkit-text-stroke:0.2px #262626;">John</div>
<div class="t" style="left:27.00px;top:285.37px;font-size:13.8px;color:#262626;font-weight:normal;transform:scaleX(0.95);transform-origin:0 0;-webkit-text-stroke:0.2px #262626;">Simon</div>
<div class="t" style="left:27.00px;top:305.67px;font-size:13.8px;color:#262626;font-weight:normal;transform:scaleX(0.95);transform-origin:0 0;-webkit-text-stroke:0.2px #262626;">Charles</div>
<div class="t" style="left:27.00px;top:325.97px;font-size:13.8px;color:#262626;font-weight:normal;transform:scaleX(0.95);transform-origin:0 0;-webkit-text-stroke:0.2px #262626;">Jane</div>
<div class="t" style="left:27.00px;top:346.27px;font-size:13.8px;color:#262626;font-weight:normal;transform:scaleX(0.95);transform-origin:0 0;-webkit-text-stroke:0.2px #262626;">Alison</div>
<div class="t" style="left:235.70px;top:204.17px;font-size:13.8px;color:#262626;font-weight:normal;transform:scaleX(0.95);transform-origin:0 0;text-decoration:underline;text-decoration-thickness:1px;text-underline-offset:2.8px;-webkit-text-stroke:0.2px #262626;">Names</div>
<div class="t" style="left:300.70px;top:204.17px;font-size:13.8px;color:#262626;font-weight:normal;transform:scaleX(0.95);transform-origin:0 0;text-decoration:underline;text-decoration-thickness:1px;text-underline-offset:2.8px;-webkit-text-stroke:0.2px #262626;">No Dup</div>
<div class="t" style="left:235.70px;top:224.47px;font-size:13.8px;color:#262626;font-weight:normal;transform:scaleX(0.95);transform-origin:0 0;-webkit-text-stroke:0.2px #262626;">Peter</div>
<div class="t" style="left:235.70px;top:244.77px;font-size:13.8px;color:#262626;font-weight:normal;transform:scaleX(0.95);transform-origin:0 0;-webkit-text-stroke:0.2px #262626;">Jane</div>
<div class="t" style="left:235.70px;top:265.07px;font-size:13.8px;color:#262626;font-weight:normal;transform:scaleX(0.95);transform-origin:0 0;-webkit-text-stroke:0.2px #262626;">Jane</div>
<div class="t" style="left:235.70px;top:285.37px;font-size:13.8px;color:#262626;font-weight:normal;transform:scaleX(0.95);transform-origin:0 0;-webkit-text-stroke:0.2px #262626;">Alison</div>
<div class="t" style="left:235.70px;top:305.67px;font-size:13.8px;color:#262626;font-weight:normal;transform:scaleX(0.95);transform-origin:0 0;-webkit-text-stroke:0.2px #262626;">Simon</div>
<div class="t" style="left:235.70px;top:325.97px;font-size:13.8px;color:#262626;font-weight:normal;transform:scaleX(0.95);transform-origin:0 0;-webkit-text-stroke:0.2px #262626;">Mary</div>
<div class="t" style="left:235.70px;top:346.27px;font-size:13.8px;color:#262626;font-weight:normal;transform:scaleX(0.95);transform-origin:0 0;-webkit-text-stroke:0.2px #262626;">Simon</div>
<div class="t" style="left:235.70px;top:366.57px;font-size:13.8px;color:#262626;font-weight:normal;transform:scaleX(0.95);transform-origin:0 0;-webkit-text-stroke:0.2px #262626;">Charles</div>
<div class="t" style="left:235.70px;top:386.87px;font-size:13.8px;color:#262626;font-weight:normal;transform:scaleX(0.95);transform-origin:0 0;-webkit-text-stroke:0.2px #262626;">Charles</div>
<div class="t" style="left:235.70px;top:407.17px;font-size:13.8px;color:#262626;font-weight:normal;transform:scaleX(0.95);transform-origin:0 0;-webkit-text-stroke:0.2px #262626;">John</div>
<div class="t" style="left:443.10px;top:204.17px;font-size:13.8px;color:#262626;font-weight:normal;transform:scaleX(0.95);transform-origin:0 0;text-decoration:underline;text-decoration-thickness:1px;text-underline-offset:2.8px;-webkit-text-stroke:0.2px #262626;">Names</div>
<div class="t" style="left:522.80px;top:204.17px;font-size:13.8px;color:#262626;font-weight:normal;transform:scaleX(0.95);transform-origin:0 0;text-decoration:underline;text-decoration-thickness:1px;text-underline-offset:2.8px;-webkit-text-stroke:0.2px #262626;">Choice</div>
<div class="t" style="left:597.40px;top:204.17px;font-size:13.8px;color:#262626;font-weight:normal;transform:scaleX(0.95);transform-origin:0 0;text-decoration:underline;text-decoration-thickness:1px;text-underline-offset:2.8px;-webkit-text-stroke:0.2px #262626;">Veg Only</div>
<div class="t" style="left:443.10px;top:224.47px;font-size:13.8px;color:#262626;font-weight:normal;transform:scaleX(0.95);transform-origin:0 0;-webkit-text-stroke:0.2px #262626;">Mary</div>
<div class="t" style="left:522.80px;top:224.47px;font-size:13.8px;color:#262626;font-weight:normal;transform:scaleX(0.95);transform-origin:0 0;-webkit-text-stroke:0.2px #262626;">Meat</div>
<div class="t" style="left:443.10px;top:244.77px;font-size:13.8px;color:#262626;font-weight:normal;transform:scaleX(0.95);transform-origin:0 0;-webkit-text-stroke:0.2px #262626;">Peter</div>
<div class="t" style="left:522.80px;top:244.77px;font-size:13.8px;color:#262626;font-weight:normal;transform:scaleX(0.95);transform-origin:0 0;-webkit-text-stroke:0.2px #262626;">Veg</div>
<div class="t" style="left:443.10px;top:265.07px;font-size:13.8px;color:#262626;font-weight:normal;transform:scaleX(0.95);transform-origin:0 0;-webkit-text-stroke:0.2px #262626;">John</div>
<div class="t" style="left:522.80px;top:265.07px;font-size:13.8px;color:#262626;font-weight:normal;transform:scaleX(0.95);transform-origin:0 0;-webkit-text-stroke:0.2px #262626;">Veg</div>
<div class="t" style="left:443.10px;top:285.37px;font-size:13.8px;color:#262626;font-weight:normal;transform:scaleX(0.95);transform-origin:0 0;-webkit-text-stroke:0.2px #262626;">Simon</div>
<div class="t" style="left:522.80px;top:285.37px;font-size:13.8px;color:#262626;font-weight:normal;transform:scaleX(0.95);transform-origin:0 0;-webkit-text-stroke:0.2px #262626;">Meat</div>
<div class="t" style="left:443.10px;top:305.67px;font-size:13.8px;color:#262626;font-weight:normal;transform:scaleX(0.95);transform-origin:0 0;-webkit-text-stroke:0.2px #262626;">Charles</div>
<div class="t" style="left:522.80px;top:305.67px;font-size:13.8px;color:#262626;font-weight:normal;transform:scaleX(0.95);transform-origin:0 0;-webkit-text-stroke:0.2px #262626;">Veg</div>
<div class="t" style="left:443.10px;top:325.97px;font-size:13.8px;color:#262626;font-weight:normal;transform:scaleX(0.95);transform-origin:0 0;-webkit-text-stroke:0.2px #262626;">Jane</div>
<div class="t" style="left:522.80px;top:325.97px;font-size:13.8px;color:#262626;font-weight:normal;transform:scaleX(0.95);transform-origin:0 0;-webkit-text-stroke:0.2px #262626;">Meat</div>
<div class="t" style="left:443.10px;top:346.27px;font-size:13.8px;color:#262626;font-weight:normal;transform:scaleX(0.95);transform-origin:0 0;-webkit-text-stroke:0.2px #262626;">Alison</div>
<div class="t" style="left:522.80px;top:346.27px;font-size:13.8px;color:#262626;font-weight:normal;transform:scaleX(0.95);transform-origin:0 0;-webkit-text-stroke:0.2px #262626;">Veg</div>
<div class="a" style="left:88.4px;top:219.3px;width:89.6px;height:22px;border:1.5px solid #5a8a6a"></div>
<div class="a" style="left:176px;top:239px;width:2.8px;height:2.8px;background:#4a7a5a"></div>
<div class="t" style="left:90.80px;top:224.97px;font-size:12.5px;color:#333;font-weight:normal;transform:scaleX(0.85);transform-origin:0 0;-webkit-text-stroke:0.3px #333;">=</div>
<div class="a" style="left:97.9px;top:222.3px;width:1px;height:16.9px;background:#444"></div>
<svg class="a" style="left:145px;top:285px" width="15" height="18" viewBox="145 285 15 18"><path d="M150.5 290.2 V298.4 L152.4 296.6 L153.8 299.6 L155.1 299 L153.7 296.1 H156.3Z" fill="#111" stroke="#f5f5f5" stroke-width="0.6"/></svg>
<div class="a" style="left:0px;top:0px;width:943px;height:1.2px;background:#151515"></div>
<div class="a" style="left:0px;top:0px;width:1.2px;height:442px;background:#151515"></div>
<div class="a" style="left:941.2px;top:0px;width:1.8px;height:442px;background:#151515"></div>
<div class="a" style="left:0px;top:440.5px;width:943px;height:1.5px;background:#151515"></div>
</body></html>
